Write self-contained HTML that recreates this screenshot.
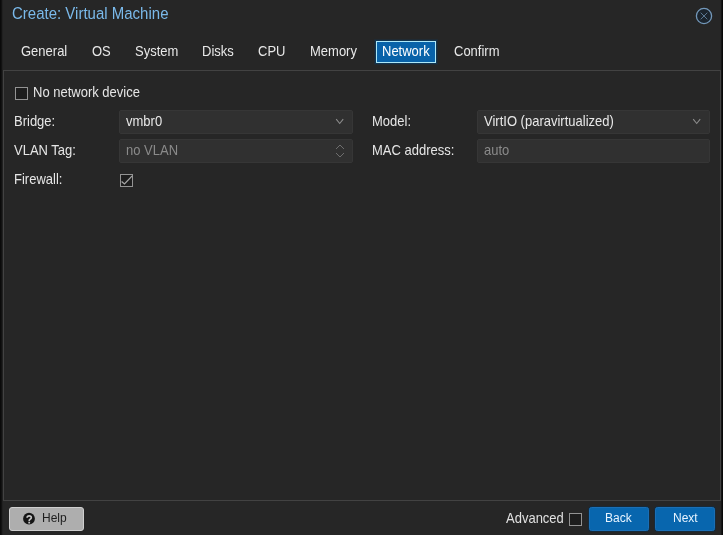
<!DOCTYPE html>
<html><head><meta charset="utf-8">
<style>
*{box-sizing:border-box;margin:0;padding:0}
html,body{width:723px;height:535px;overflow:hidden;background:#262626}
body{position:relative;font-family:"Liberation Sans",sans-serif;font-size:13px;color:#e0e0e0}
.a{position:absolute;white-space:nowrap;line-height:1}
.t{transform:scaleY(1.09);transform-origin:0 11px;will-change:transform}
.g{will-change:transform}
#ls{left:0;top:0;width:3px;height:535px;background:linear-gradient(to right,#0a0a0a 0,#0a0a0a 1px,#121212 1px,#121212 2px,#202020 2px)}
#rs{left:721px;top:0;width:2px;height:535px;background:linear-gradient(to right,#151515 0,#151515 1px,#080808 1px)}
#title{left:12px;top:6px;font-size:15px;color:#7ab9ea;transform:scaleY(1.05);transform-origin:0 12.7px;will-change:transform}
#close{left:695px;top:7px;width:18px;height:18px}
.tab{top:45px;color:#e8e8e8}
#net{left:376px;top:41px;width:60px;height:22px;background:#0862a9;border:1px solid #aee8f8;box-shadow:0 0 0 1px #12344e,0 0 0 2px #1f2a33}
#net span{position:absolute;left:5px;top:3px;color:#fff}
#panel{left:3px;top:70px;width:718px;height:431px;border:1px solid #424242;background:#262626}
.fld{background:#303030;border:1px solid #363636;border-radius:2px;height:24px}
.lbl{color:#e6e6e6}
.cb{width:13px;height:13px;border:1px solid #939393;background:#1d1d1d}
.btn{border-radius:3px;height:24px}
.blue{background:#0866ae;border:1px solid #1a6fb6;border-radius:2.5px;box-shadow:0 0 0 1px #162a3a;color:#fff}
</style></head><body>
<div class="a" id="ls"></div>
<div class="a" id="rs"></div>
<div class="a" id="title">Create: Virtual Machine</div>
<svg class="a" id="close" viewBox="0 0 18 18"><circle cx="9" cy="9" r="7.6" fill="#1b242d" stroke="#7398ba" stroke-width="1.3"/><path d="M5.7 5.7L12.3 12.3M12.3 5.7L5.7 12.3" stroke="#62819d" stroke-width="0.9"/></svg>

<div class="a t tab" style="left:20.5px">General</div>
<div class="a t tab" style="left:91.5px">OS</div>
<div class="a t tab" style="left:134.5px">System</div>
<div class="a t tab" style="left:201.5px">Disks</div>
<div class="a t tab" style="left:257.5px">CPU</div>
<div class="a t tab" style="left:310px">Memory</div>
<div class="a" id="net"><span class="t">Network</span></div>
<div class="a t tab" style="left:454px">Confirm</div>

<div class="a" id="panel"></div>

<div class="a cb" style="left:15px;top:87px"></div>
<div class="a t lbl" style="left:33px;top:86px">No network device</div>

<div class="a t lbl" style="left:14px;top:115px">Bridge:</div>
<div class="a fld" style="left:119px;top:110px;width:234px"></div>
<div class="a t" style="left:125.5px;top:115px;color:#e8e8e8">vmbr0</div>
<svg class="a" style="left:335px;top:117.5px" width="10" height="8" viewBox="0 0 10 8"><path d="M1.2 1.2L4.7 5.5L8.2 1.2" fill="none" stroke="#8c8c8c" stroke-width="1.1"/></svg>

<div class="a t lbl" style="left:14px;top:144px">VLAN Tag:</div>
<div class="a fld" style="left:119px;top:139px;width:234px"></div>
<div class="a t" style="left:125.5px;top:144px;color:#8a8a8a">no VLAN</div>
<svg class="a" style="left:335px;top:142px" width="10" height="18" viewBox="0 0 10 18"><path d="M1 7L5 3L9 7M1 11L5 15L9 11" fill="none" stroke="#6e6e6e" stroke-width="1"/></svg>

<div class="a t lbl" style="left:14px;top:173px">Firewall:</div>
<div class="a cb" style="left:120px;top:174px"></div>
<svg class="a" style="left:120px;top:174px" width="13" height="13" viewBox="0 0 13 13"><path d="M1.6 7.4L4.5 9.9L12.2 1.9" fill="none" stroke="#a6a6a6" stroke-width="1.3"/></svg>

<div class="a t lbl" style="left:372px;top:115px">Model:</div>
<div class="a fld" style="left:477px;top:110px;width:233px"></div>
<div class="a t" style="left:483.5px;top:115px;color:#e8e8e8">VirtIO (paravirtualized)</div>
<svg class="a" style="left:692px;top:117.5px" width="10" height="8" viewBox="0 0 10 8"><path d="M1.2 1.2L4.7 5.5L8.2 1.2" fill="none" stroke="#8c8c8c" stroke-width="1.1"/></svg>

<div class="a t lbl" style="left:372px;top:144px">MAC address:</div>
<div class="a fld" style="left:477px;top:139px;width:233px"></div>
<div class="a t" style="left:483.5px;top:144px;color:#8a8a8a">auto</div>

<div class="a btn" style="left:9px;top:507px;width:75px;background:#aeaeae;border:1px solid #cfcfcf"></div>
<svg class="a" style="left:22px;top:512px" width="14" height="14" viewBox="0 0 14 14"><circle cx="7" cy="6.7" r="5.9" fill="#151515"/><path d="M5.1 5.8Q5.2 3.9 7.2 3.9Q9.3 3.9 9.3 5.6Q9.3 6.7 8.1 7.3Q7.2 7.8 7.2 8.9" fill="none" stroke="#c4c4c4" stroke-width="1.7"/><rect x="6.3" y="9.7" width="1.8" height="1.8" fill="#c4c4c4"/></svg>
<div class="a g" style="left:42px;top:512px;font-size:12px;color:#1e1e1e">Help</div>

<div class="a t" style="left:506px;top:512px;color:#e0e0e0">Advanced</div>
<div class="a cb" style="left:569px;top:513px"></div>
<div class="a btn blue" style="left:589px;top:507px;width:60px"></div>
<div class="a g" style="left:605px;top:512px;font-size:12px;color:#e8f4ff">Back</div>
<div class="a btn blue" style="left:655px;top:507px;width:60px"></div>
<div class="a g" style="left:672.5px;top:512px;font-size:12px;color:#e8f4ff">Next</div>
</body></html>
